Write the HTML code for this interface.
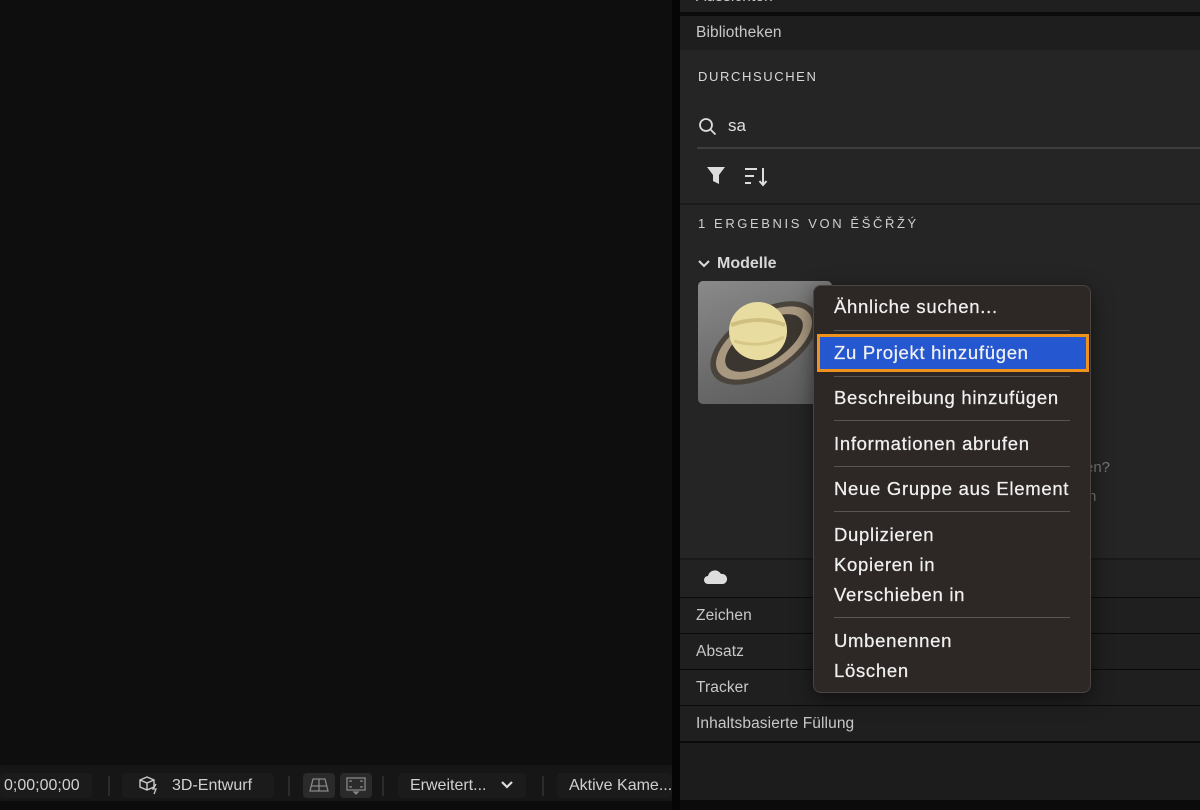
<!DOCTYPE html>
<html><head><meta charset="utf-8"><style>
*{margin:0;padding:0;box-sizing:border-box}
body{width:1200px;height:810px;background:#0b0b0b;position:relative;overflow:hidden;font-family:"Liberation Sans",sans-serif;color:#cfcfcf}
.a{position:absolute}
.row{position:absolute;left:680px;width:520px;height:35px;background:#1f1f1f;font-size:15.5px;color:#c8c8c8;padding-left:16px;line-height:35px;letter-spacing:0.1px}
.mi{position:absolute;left:834px;font-size:18.5px;color:#f0f0f0;letter-spacing:0.7px;-webkit-text-stroke:0.25px #f0f0f0}
.sep{position:absolute;left:834px;width:236px;height:1px;background:#5a5452}
.bb{position:absolute;top:773px;height:25px;background:#1b1b1b;border-radius:4px;font-size:16px;color:#d0d0d0;line-height:25px}
</style></head><body>
<div class="a" style="left:0;top:0;width:672px;height:765px;background:#0e0e0e"></div>
<div class="a" style="left:0;top:765px;width:672px;height:36px;background:#161616"></div>
<div class="a" style="left:672px;top:0;width:8px;height:810px;background:#050505"></div>
<div class="bb" style="left:0;width:92px;padding-left:4px">0;00;00;00</div>
<div class="a" style="left:108px;top:776px;width:2px;height:20px;background:#2c2c2c"></div>
<div class="bb" style="left:122px;width:152px;padding-left:50px">3D-Entwurf</div>
<svg class="a" style="left:138px;top:775px" width="24" height="20" viewBox="0 0 24 20" fill="none" stroke="#ccc" stroke-width="1.4"><path d="M2 5l7-3 7 3v7l-7 3-7-3z M2 5l7 3 7-3 M9 8v7"/><path d="M18 9l-3 5h3l-2 5" stroke-width="1.3"/></svg>
<div class="a" style="left:288px;top:776px;width:2px;height:20px;background:#2c2c2c"></div>
<div class="a" style="left:303px;top:773px;width:32px;height:25px;background:#2a2a2a;border-radius:4px"></div>
<svg class="a" style="left:309px;top:777px" width="20" height="16" fill="none" stroke="#888" stroke-width="1.3"><path d="M4 2h12l3 12H1z M10 2v12 M2 9h16"/></svg>
<div class="a" style="left:340px;top:773px;width:32px;height:25px;background:#2a2a2a;border-radius:4px"></div>
<svg class="a" style="left:345px;top:776px" width="22" height="20" fill="none" stroke="#888" stroke-width="1.3"><rect x="2" y="2" width="18" height="12"/><path d="M5 6V5h2 M15 5h2v1 M5 10v1h2 M17 10v1h-2"/><path d="M13 16l-2 2-2-2z" fill="#888"/></svg>
<div class="a" style="left:382px;top:776px;width:2px;height:20px;background:#2c2c2c"></div>
<div class="bb" style="left:398px;width:128px;padding-left:12px">Erweitert...</div>
<svg class="a" style="left:500px;top:779px" width="14" height="12" fill="none" stroke="#ddd" stroke-width="2.2"><path d="M2 3l5 5 5-5"/></svg>
<div class="a" style="left:542px;top:776px;width:2px;height:20px;background:#2c2c2c"></div>
<div class="bb" style="left:557px;width:115px;padding-left:12px;white-space:nowrap;overflow:hidden">Aktive Kame...</div>

<div class="row" style="top:0;height:12px;line-height:12px;overflow:hidden"><span style="position:relative;top:-9px">Aussichten</span></div>
<div class="row" style="top:16px;height:34px;line-height:34px;background:#1e1e1e">Bibliotheken</div>
<div class="a" style="left:680px;top:50px;width:520px;height:508px;background:#252525"></div>
<div class="a" style="left:698px;top:69px;font-size:13px;letter-spacing:1.6px;color:#d8d8d8">DURCHSUCHEN</div>
<svg class="a" style="left:698px;top:117px" width="20" height="20" fill="none" stroke="#ddd" stroke-width="1.8"><circle cx="8" cy="8" r="6"/><path d="M12.5 12.5l5 5"/></svg>
<div class="a" style="left:728px;top:116px;font-size:17px;color:#e0e0e0">sa</div>
<div class="a" style="left:697px;top:147px;width:503px;height:2px;background:#3e3e3e"></div>
<svg class="a" style="left:706px;top:166px" width="20" height="20"><path d="M1 1h18l-6 8v9l-6-3V9z" fill="#ddd"/></svg>
<svg class="a" style="left:744px;top:166px" width="26" height="22" fill="none" stroke="#ddd" stroke-width="2"><path d="M1 3h12 M1 10h9 M1 17h6 M19 2v17 M15.5 15l3.5 4 3.5-4"/></svg>
<div class="a" style="left:680px;top:203px;width:520px;height:2px;background:#1b1b1b"></div>
<div class="a" style="left:698px;top:216px;font-size:13px;letter-spacing:2.6px;color:#cfcfcf">1 ERGEBNIS VON ĚŠČŘŽÝ</div>
<svg class="a" style="left:698px;top:259px" width="12" height="10" fill="none" stroke="#ddd" stroke-width="2"><path d="M1 2l5 5 5-5"/></svg>
<div class="a" style="left:717px;top:255px;font-size:16px;font-weight:bold;color:#d8d8d8">Modelle</div>
<div class="a" style="left:698px;top:281px;width:134px;height:123px;border-radius:5px;background:linear-gradient(160deg,#8a8a8a,#6a6a6a 60%,#5a5a5a);overflow:hidden">
<svg width="134" height="123"><ellipse cx="66" cy="62" rx="60" ry="32" transform="rotate(-32 66 62)" fill="#4a443c"/><ellipse cx="66" cy="62" rx="54" ry="27" transform="rotate(-32 66 62)" fill="#a89880"/><ellipse cx="66" cy="62" rx="44" ry="20" transform="rotate(-32 66 62)" fill="#3c3630"/><circle cx="60" cy="50" r="29" fill="#e8dca0"/><path d="M33 44q28-10 54 0" stroke="#cfc080" stroke-width="4" fill="none"/><path d="M36 60q28 8 50-4" stroke="#d8c888" stroke-width="3" fill="none"/></svg></div>
<div class="a" style="left:1085px;top:459px;font-size:15px;color:#777">en?</div>
<div class="a" style="left:1088px;top:488px;font-size:15px;color:#777">n</div>
<div class="a" style="left:680px;top:558px;width:520px;height:2px;background:#1a1a1a"></div>
<div class="a" style="left:680px;top:560px;width:520px;height:37px;background:#222"></div>
<svg class="a" style="left:703px;top:569px" width="26" height="16"><path d="M5 15a4 4 0 010-8 7 7 0 0113-2 5 5 0 012 10z" fill="#ddd"/></svg>
<div class="row" style="top:598px">Zeichen</div>
<div class="row" style="top:634px">Absatz</div>
<div class="row" style="top:670px">Tracker</div>
<div class="row" style="top:706px">Inhaltsbasierte Füllung</div>
<div class="a" style="left:680px;top:743px;width:520px;height:57px;background:#1c1c1c"></div>

<div class="a" style="left:813px;top:285px;width:278px;height:408px;background:#2d2725;border:1px solid #4a4442;border-radius:8px;box-shadow:0 6px 20px rgba(0,0,0,.5)"></div>
<div class="mi" style="top:296px">Ähnliche suchen...</div>
<div class="sep" style="top:330px"></div>
<div class="a" style="left:817px;top:334px;width:272px;height:38px;background:#2557d0;border:3px solid #f0921e"></div>
<div class="mi" style="top:342px">Zu Projekt hinzufügen</div>
<div class="sep" style="top:376px"></div>
<div class="mi" style="top:387px">Beschreibung hinzufügen</div>
<div class="sep" style="top:420px"></div>
<div class="mi" style="top:433px">Informationen abrufen</div>
<div class="sep" style="top:466px"></div>
<div class="mi" style="top:478px">Neue Gruppe aus Element</div>
<div class="sep" style="top:511px"></div>
<div class="mi" style="top:524px">Duplizieren</div>
<div class="mi" style="top:554px">Kopieren in</div>
<div class="mi" style="top:584px">Verschieben in</div>
<div class="sep" style="top:617px"></div>
<div class="mi" style="top:630px">Umbenennen</div>
<div class="mi" style="top:660px">Löschen</div>
</body></html>
